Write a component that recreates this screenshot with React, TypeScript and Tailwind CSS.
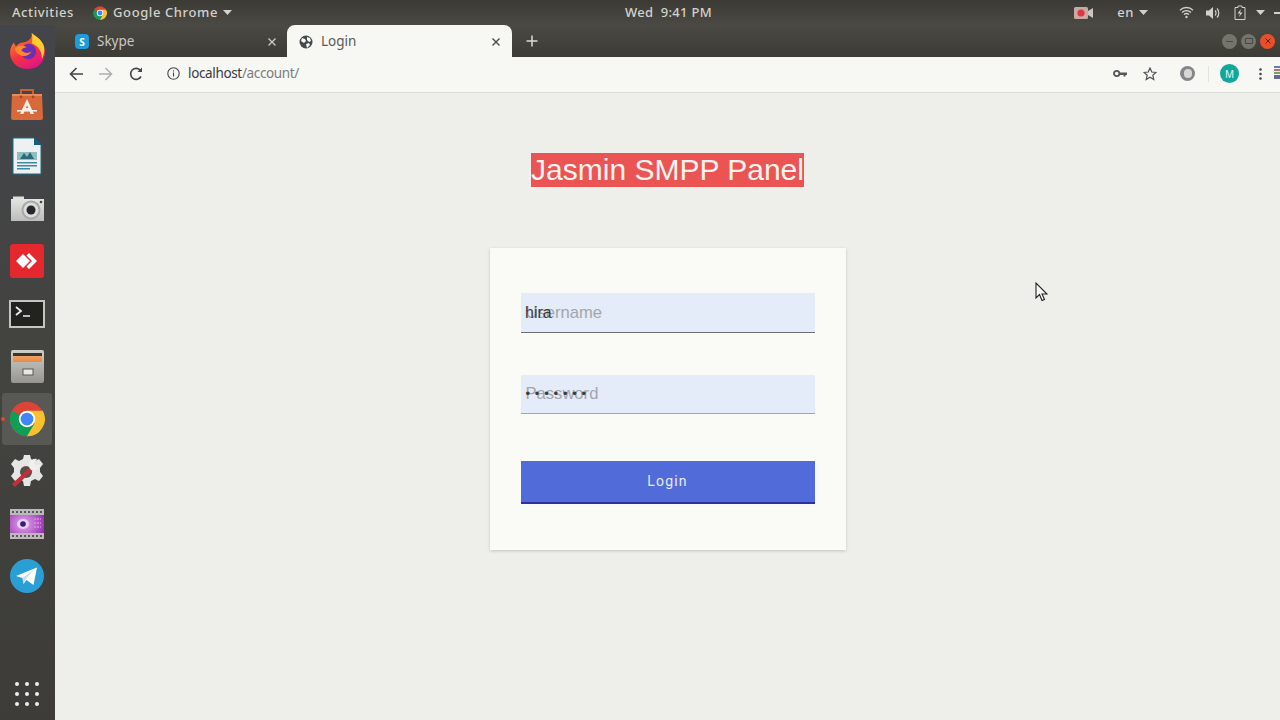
import React from "react";

const Chrome = ({ s }: { s: number }) => (
  <svg width={s} height={s} viewBox="0 0 48 48">
    <circle cx="24" cy="24" r="23" fill="#db4437" />
    <path d="M24 24 L44 36 A23 23 0 0 1 24 47 A23 23 0 0 1 4 13 Z" fill="#0f9d58" />
    <path d="M24 13 H45 A23 23 0 0 1 24 47 L34 30 Z" fill="#fbc02d" />
    <circle cx="24" cy="24" r="11" fill="#fff" />
    <circle cx="24" cy="24" r="8.5" fill="#4285f4" />
  </svg>
);

const Dock = ({ children, active }: { children: React.ReactNode; active?: boolean }) => (
  <div className="relative h-[52.5px] w-full flex items-center justify-center shrink-0 pr-[1px]">
    {active && <div className="absolute left-[2px] top-0 w-[50px] h-[52px] bg-[#585855] rounded-[3px]" />}
    {active && <div className="absolute left-[1px] top-[24px] w-[4px] h-[4px] rounded-full bg-[#dd4a30]" />}
    <div className="relative flex">{children}</div>
  </div>
);

export default function App() {
  return (
    <div className="w-[1280px] h-[720px] overflow-hidden flex flex-col bg-[#eeeeea] font-['Liberation_Sans',sans-serif]">
      {/* Top bar */}
      <div className="h-[25px] shrink-0 relative flex items-center bg-gradient-to-b from-[#3b3a35] to-[#4a4944] text-[#d2d1cc] text-[13px] font-['Noto_Sans',sans-serif] font-medium tracking-[0.6px]">
        <span className="ml-[12px]">Activities</span>
        <span className="ml-[19px] flex"><Chrome s={14} /></span>
        <span className="ml-[6px]">Google Chrome</span>
        <svg className="ml-[5px]" width="9" height="5" viewBox="0 0 9 5"><path d="M0 0h9L4.5 5z" fill="#d2d1cc" /></svg>
        <span className="absolute left-[625px] top-[3px] tracking-[0.3px]">Wed&nbsp;&nbsp;9:41 PM</span>
        <div className="ml-auto flex items-center">
          <svg width="20" height="14" viewBox="0 0 20 14">
            <rect x="0" y="1" width="14" height="12" rx="1.5" fill="#c9a9a4" />
            <circle cx="7" cy="7" r="3.6" fill="#e0363f" />
            <path d="M14 5l5-3v10l-5-3z" fill="#c9c7c2" />
          </svg>
          <span className="ml-[23px]">en</span>
          <svg className="ml-[5px]" width="9" height="5" viewBox="0 0 9 5"><path d="M0 0h9L4.5 5z" fill="#d2d1cc" /></svg>
          <svg className="ml-[31px]" width="15" height="13" viewBox="0 0 15 13" fill="none" stroke="#d2d1cc" strokeWidth="1.3">
            <path d="M1 4.2a9.2 9.2 0 0 1 13 0M3 6.5a6.2 6.2 0 0 1 9 0M5 8.7a3.2 3.2 0 0 1 5 0" />
            <circle cx="7.5" cy="11" r="1.2" fill="#d2d1cc" stroke="none" />
          </svg>
          <svg className="ml-[12px]" width="15" height="14" viewBox="0 0 15 14" fill="none" stroke="#d2d1cc" strokeWidth="1.2">
            <path d="M0 4.5h3L7 1v12L3 9.5H0z" fill="#d2d1cc" stroke="none" />
            <path d="M9 4.5a3.5 3.5 0 0 1 0 5M11 2.5a6.5 6.5 0 0 1 0 9" />
          </svg>
          <svg className="ml-[13px]" width="12" height="15" viewBox="0 0 12 15" fill="none">
            <path d="M4 1h4v1.5h3v12H1v-12h3z" stroke="#d2d1cc" strokeWidth="1" />
            <path d="M7 4L3.5 8.5H6L5 12l3.500-4.500H6z" fill="#d2d1cc" />
          </svg>
          <svg className="ml-[10px]" width="9" height="5" viewBox="0 0 9 5"><path d="M0 0h9L4.5 5z" fill="#d2d1cc" /></svg>
          <div className="ml-[9px] w-[6px] h-[2px] bg-[#d2d1cc]" />
        </div>
      </div>

      <div className="flex-1 flex min-h-0">
        {/* Dock */}
        <div className="w-[55px] shrink-0 flex flex-col bg-gradient-to-b from-[#44454b] via-[#43433f] to-[#3d3c38]">
          <Dock>
            <svg width="37" height="37" viewBox="0 0 36 36">
              <defs>
                <linearGradient id="ff" x1="0" y1="0" x2="0.6" y2="1">
                  <stop offset="0" stopColor="#ff9a22" />
                  <stop offset="0.6" stopColor="#f5333f" />
                  <stop offset="1" stopColor="#e31587" />
                </linearGradient>
              </defs>
              <path d="M22 0c2 3 9 6 12 13 3 9-1 22-16 22C7 35 1 27 1 19c0-4 2-8 4-10 0 2 1 3 2 4 2-3 5-4 8-4 4-1 8-4 7-9z" fill="url(#ff)" />
              <path d="M22 0c4 3 10 6 12 13 1 5 0 9-2 12 0-7-3-12-10-15 1-3 1-6 0-10z" fill="#ffcb2e" />
              <circle cx="19" cy="18" r="7.5" fill="#6b2fb5" />
              <path d="M6 15c3-3 8-4 11-1-3 0-4 1-5 3 3 3 7 3 10 1-2 4-8 6-12 3-3-1-4-4-4-6z" fill="#ff8a2a" />
            </svg>
          </Dock>
          <Dock>
            <svg width="34" height="34" viewBox="0 0 34 34">
              <path d="M11 7V3h12v4" fill="none" stroke="#c9602f" strokeWidth="2" />
              <path d="M2 7h30l1 24c0 1-1 2-2 2H3c-1 0-2-1-2-2z" fill="#d8693a" />
              <path d="M2 7h30v2H2z" fill="#e88c60" />
              <circle cx="11" cy="10" r="1.4" fill="#a9471c" />
              <circle cx="23" cy="10" r="1.4" fill="#a9471c" />
              <path d="M17 12l7 15h-3.500l-1-3h-5l-1 3H10zM16 21h2.200L17 18z" fill="#fbeee6" />
              <path d="M7 23h20v1.600H7z" fill="#fbeee6" />
            </svg>
          </Dock>
          <Dock>
            <svg width="30" height="38" viewBox="0 0 30 38">
              <path d="M1 1h21l7 7v29H1z" fill="#eef1f1" stroke="#1a6d86" strokeWidth="1" />
              <path d="M22 0l8 8h-8z" fill="#145f80" />
              <rect x="5" y="15" width="20" height="8" fill="#8ebfc0" />
              <path d="M8 22l4-6 3 4 3-5 4 7z" fill="#2d6a7a" />
              <path d="M5 25h20v1.500H5zM5 28h20v1.500H5zM5 31h13v1.500H5z" fill="#3d8aa8" />
            </svg>
          </Dock>
          <Dock>
            <svg width="35" height="26" viewBox="0 0 35 26">
              <defs>
                <linearGradient id="cam" x1="0" y1="0" x2="0" y2="1">
                  <stop offset="0" stopColor="#e4e4e2" />
                  <stop offset="1" stopColor="#bcbcba" />
                </linearGradient>
              </defs>
              <path d="M1 3h33v22H1z" fill="url(#cam)" />
              <path d="M3 0.500h11V3H3z" fill="#dededb" />
              <circle cx="21" cy="14" r="9.500" fill="#a8a8a8" />
              <circle cx="21" cy="14" r="7.500" fill="#dcdcda" />
              <circle cx="21" cy="14" r="4.500" fill="#26262c" />
              <circle cx="31" cy="6" r="1.300" fill="#444" />
            </svg>
          </Dock>
          <Dock>
            <svg width="34" height="34" viewBox="0 0 34 34">
              <rect width="34" height="34" rx="3" fill="#e5282e" />
              <path d="M6 17l7-7 7 7-7 7z" fill="#fff" />
              <path d="M19 9l8 8-8 8-2.500-2.500 5.500-5.500-5.500-5.500z" fill="#fff" />
            </svg>
          </Dock>
          <Dock>
            <svg width="36" height="28" viewBox="0 0 36 28">
              <rect x="0" y="0" width="36" height="28" fill="#c4c4c0" />
              <rect x="2" y="2" width="32" height="24" fill="#22221f" />
              <path d="M7 7l5 4-5 4" fill="none" stroke="#eee" strokeWidth="1.800" />
              <path d="M14 16h7" stroke="#eee" strokeWidth="1.500" />
            </svg>
          </Dock>
          <Dock>
            <svg width="33" height="33" viewBox="0 0 33 33">
              <defs>
                <linearGradient id="cab" x1="0" y1="0" x2="0" y2="1">
                  <stop offset="0" stopColor="#cfcfca" />
                  <stop offset="1" stopColor="#96958f" />
                </linearGradient>
                <linearGradient id="drw" x1="0" y1="0" x2="0" y2="1">
                  <stop offset="0" stopColor="#3b352f" />
                  <stop offset="0.35" stopColor="#3b352f" />
                  <stop offset="0.36" stopColor="#f0a060" />
                  <stop offset="1" stopColor="#e88a48" />
                </linearGradient>
              </defs>
              <rect width="33" height="33" rx="2" fill="url(#cab)" />
              <rect x="2" y="3" width="29" height="9" fill="url(#drw)" />
              <rect x="12" y="19" width="10" height="6" fill="#e8e8e4" stroke="#5a5953" />
            </svg>
          </Dock>
          <Dock active>
            <Chrome s={36} />
          </Dock>
          <Dock>
            <svg width="36" height="36" viewBox="0 0 36 36">
              <path d="M15 2h6l1 4 4 2 4-2 4 5-3 4v4l3 4-4 5-4-2-4 2-1 5h-6l-1-5-4-2-4 2-4-5 3-4v-4L2 11l4-5 4 2 4-2z" fill="#e6e6e4" />
              <circle cx="17" cy="19" r="6" fill="#52514c" />
              <path d="M3 31L21 14l3 3L6 34z" fill="#c62d38" />
              <path d="M20 14c-1-5 3-9 8-8l-3 4 2 3 4-2c0 5-5 8-9 6z" fill="#f0f0ee" />
            </svg>
          </Dock>
          <Dock>
            <svg width="34" height="30" viewBox="0 0 34 30">
              <defs>
                <radialGradient id="vid" cx="0.4" cy="0.5" r="0.7">
                  <stop offset="0" stopColor="#e6a8f0" />
                  <stop offset="1" stopColor="#8f28a8" />
                </radialGradient>
              </defs>
              <rect y="0" width="34" height="30" rx="1" fill="url(#vid)" />
              <rect y="0" width="34" height="6" fill="#bdb8bc" />
              <rect y="24" width="34" height="6" fill="#bdb8bc" />
              <path d="M2 3h30M2 27h30" stroke="#3a3a3a" strokeWidth="1.400" strokeDasharray="2 2" />
              <ellipse cx="13" cy="15" rx="6" ry="5" fill="#e6d0ee" />
              <circle cx="13" cy="15" r="2.800" fill="#3a1a78" />
              <path d="M24 10h7M24 14h7M24 18h7" stroke="#d890ea" strokeWidth="1.500" strokeDasharray="2 1" />
            </svg>
          </Dock>
          <Dock>
            <svg width="34" height="34" viewBox="0 0 34 34">
              <circle cx="17" cy="17" r="17" fill="#2a9fd6" />
              <path d="M6 17L27 8.500 23.500 26l-7-5-3 4-1-6z" fill="#fff" />
              <path d="M12.500 19l11-8-8 9.500-2 4.500z" fill="#c8daea" />
            </svg>
          </Dock>
          <div className="mt-auto mb-[14px] w-full flex justify-center pr-[1px]">
            <div className="grid grid-cols-3 gap-x-[6px] gap-y-[6px]">
              {Array.from({ length: 9 }).map((_, i) => (
                <div key={i} className="w-[4px] h-[4px] rounded-full bg-[#eeeeec]" />
              ))}
            </div>
          </div>
        </div>

        {/* Browser */}
        <div className="flex-1 flex flex-col min-w-0">
          {/* Tab strip */}
          <div className="h-[32px] shrink-0 relative flex bg-gradient-to-b from-[#4a4944] to-[#3c3b36] text-[13.5px] font-['Noto_Sans',sans-serif]">
            <div className="w-[232px] flex items-center pl-[20px] pr-[11px] pt-[1px] text-[#c9c8c3]">
              <svg width="14" height="15" viewBox="0 0 14 15">
                <rect width="14" height="15" rx="4" fill="#1b9ddb" />
                <text x="7" y="11.500" textAnchor="middle" fontSize="10" fontWeight="700" fill="#fff" fontFamily="Noto Sans">S</text>
              </svg>
              <span className="ml-[8px]">Skype</span>
              <svg className="ml-auto" width="8" height="8" viewBox="0 0 8 8"><path d="M0.500 0.500l7 7M7.500 0.500l-7 7" stroke="#c9c8c3" strokeWidth="1.400" /></svg>
            </div>
            <div className="w-[225px] flex items-center pl-[12px] pr-[12px] pt-[1px] bg-[#f7f7f4] rounded-t-[8px] text-[#5a5a58]">
              <svg width="14" height="14" viewBox="0 0 14 14">
                <circle cx="7" cy="7" r="6.500" fill="#45494d" />
                <path d="M3 3l3 1 1 2-2 2-3-2zM8 2l3 1 1 3-2 1-2-2zM7 9l3-1 1 2-3 3z" fill="#f7f7f4" />
              </svg>
              <span className="ml-[8px]">Login</span>
              <svg className="ml-auto" width="8" height="8" viewBox="0 0 8 8"><path d="M0.500 0.500l7 7M7.500 0.500l-7 7" stroke="#4a4a48" strokeWidth="1.400" /></svg>
            </div>
            <svg className="ml-[14px] self-center" width="12" height="12" viewBox="0 0 12 12"><path d="M6 0.500v11M0.500 6h11" stroke="#dcdbd6" strokeWidth="1.500" /></svg>
            <div className="ml-auto mr-[5px] flex items-center gap-[4px]">
              <div className="w-[15px] h-[15px] rounded-full bg-[#75746c] flex items-center justify-center"><div className="w-[7px] h-[1px] bg-[#4a4944]" /></div>
              <div className="w-[15px] h-[15px] rounded-full bg-[#75746c] flex items-center justify-center"><div className="w-[8px] h-[6px] border border-[#4a4944]" /></div>
              <div className="w-[15px] h-[15px] rounded-full bg-[#e9502a] flex items-center justify-center">
                <svg width="6" height="6" viewBox="0 0 6 6"><path d="M0.500 0.500l5 5M5.500 0.500l-5 5" stroke="#6e2010" strokeWidth="1" /></svg>
              </div>
            </div>
          </div>

          {/* Toolbar */}
          <div className="h-[36px] shrink-0 flex items-center pb-[2px] bg-[#f7f7f4] border-b border-[#dcdcd8] text-[13.5px] font-['Noto_Sans',sans-serif]">
            <svg className="ml-[14px]" width="14" height="14" viewBox="0 0 14 14" fill="none" stroke="#45464a" strokeWidth="1.600"><path d="M14 7H1.500M7.500 1L1.500 7l6 6" /></svg>
            <svg className="ml-[16px]" width="14" height="14" viewBox="0 0 14 14" fill="none" stroke="#b0b1ae" strokeWidth="1.600"><path d="M0 7h12.500M6.500 1l6 6-6 6" /></svg>
            <svg className="ml-[16px]" width="14" height="14" viewBox="0 0 14 14" fill="none" stroke="#45464a" strokeWidth="1.600"><path d="M12 9.500A5.500 5.500 0 1 1 11.500 3.500" /><path d="M13 0.500v4.500H8.500z" fill="#45464a" stroke="none" /></svg>
            <svg className="ml-[24px]" width="13" height="13" viewBox="0 0 13 13" fill="none" stroke="#45464a" strokeWidth="1.100"><circle cx="6.500" cy="6.500" r="5.700" /><path d="M6.500 5.500v4M6.500 3.200v1.200" /></svg>
            <span className="ml-[8px] text-[#3c3d40] tracking-[-0.35px]">localhost<span className="text-[#7b7c7e]">/account/</span></span>
            <div className="ml-auto flex items-center">
              <svg width="14" height="9" viewBox="0 0 14 9"><circle cx="3.700" cy="4.500" r="2.700" fill="none" stroke="#55565a" strokeWidth="1.800" /><path d="M6 3.500h8v2.500h-1.500v1.500h-2V6H6z" fill="#55565a" /></svg>
              <svg className="ml-[16px]" width="14" height="14" viewBox="0 0 14 14"><path d="M7 1l1.800 4 4.200 0.400-3.200 2.800 1 4.300L7 10.200 3.200 12.500l1-4.300L1 5.400 5.200 5z" fill="none" stroke="#505155" strokeWidth="1.200" /></svg>
              <div className="ml-[23px] w-[15px] h-[15px] rounded-full bg-[#85868a] flex items-center justify-center"><div className="w-[8px] h-[9px] rounded-full bg-[#d8d8d5]" /></div>
              <div className="ml-[13px] w-[1px] h-[16px] bg-[#e2e2de]" />
              <div className="ml-[11px] w-[19px] h-[19px] rounded-full bg-[#11a69c] flex items-center justify-center text-[#e6f6f4] text-[10px] leading-none">M</div>
              <svg className="ml-[20px]" width="3" height="12" viewBox="0 0 3 12"><circle cx="1.500" cy="1.500" r="1.300" fill="#45464a" /><circle cx="1.500" cy="6" r="1.300" fill="#45464a" /><circle cx="1.500" cy="10.500" r="1.300" fill="#45464a" /></svg>
              <svg className="ml-[12px]" width="6" height="16" viewBox="0 0 6 16"><rect width="6" height="2" fill="#5e7fbe" /><rect y="3" width="6" height="2" fill="#c96a6a" /><rect y="6" width="6" height="2" fill="#6da56d" /><rect y="9" width="6" height="4" fill="#6a6a8c" /></svg>
            </div>
          </div>

          {/* Page */}
          <div className="flex-1 relative flex flex-col items-center bg-[#eeeeea]">
            <h1 className="mt-[60px] h-[34px] leading-[34px] bg-[#ea5553] text-[#fdf3f0] text-[30px] font-normal whitespace-nowrap">Jasmin SMPP Panel</h1>
            <div className="mt-[61px] w-[356px] h-[302px] bg-[#fafaf6] shadow-[0_1px_3px_rgba(0,0,0,0.18)] pt-[45px] px-[31px]">
              <div className="relative h-[40px] w-full bg-[#e4ebf9] border-b border-[#6d6e72]">
                <span className="absolute left-[5px] top-[10px] text-[16.6px] leading-[19px] text-[#a3a6ab]">Username</span>
                <span className="absolute left-[4.500px] top-[10px] text-[16px] leading-[19px] text-[#3a3b3d]">hira</span>
              </div>
              <div className="relative mt-[42px] h-[39px] w-full bg-[#e4ebf9] border-b border-[#a3a5aa]">
                <span className="absolute left-[5px] top-[10px] text-[16.6px] leading-[18px] text-[#a3a6ab]">Password</span>
                <span className="absolute left-[5px] top-[10px] text-[13px] leading-[18px] tracking-[4.800px] text-[#3a3b3d]">•••••••</span>
              </div>
              <button className="mt-[47px] block w-full h-[43px] bg-[#516cd8] border-b-2 border-[#2d2fa8] text-[#e8ebfa] text-[14px] font-['Roboto',sans-serif] font-normal tracking-[1.200px]">Login</button>
            </div>
            {/* Mouse cursor */}
            <svg className="absolute left-[980px] top-[189px]" width="13" height="20" viewBox="0 0 13 20">
              <path d="M1 1v15l3.500-3.500L7 18.500l2.500-1-2.500-5.500h5z" fill="#f8f8f8" stroke="#222" strokeWidth="1.100" />
            </svg>
          </div>
        </div>
      </div>
    </div>
  );
}
